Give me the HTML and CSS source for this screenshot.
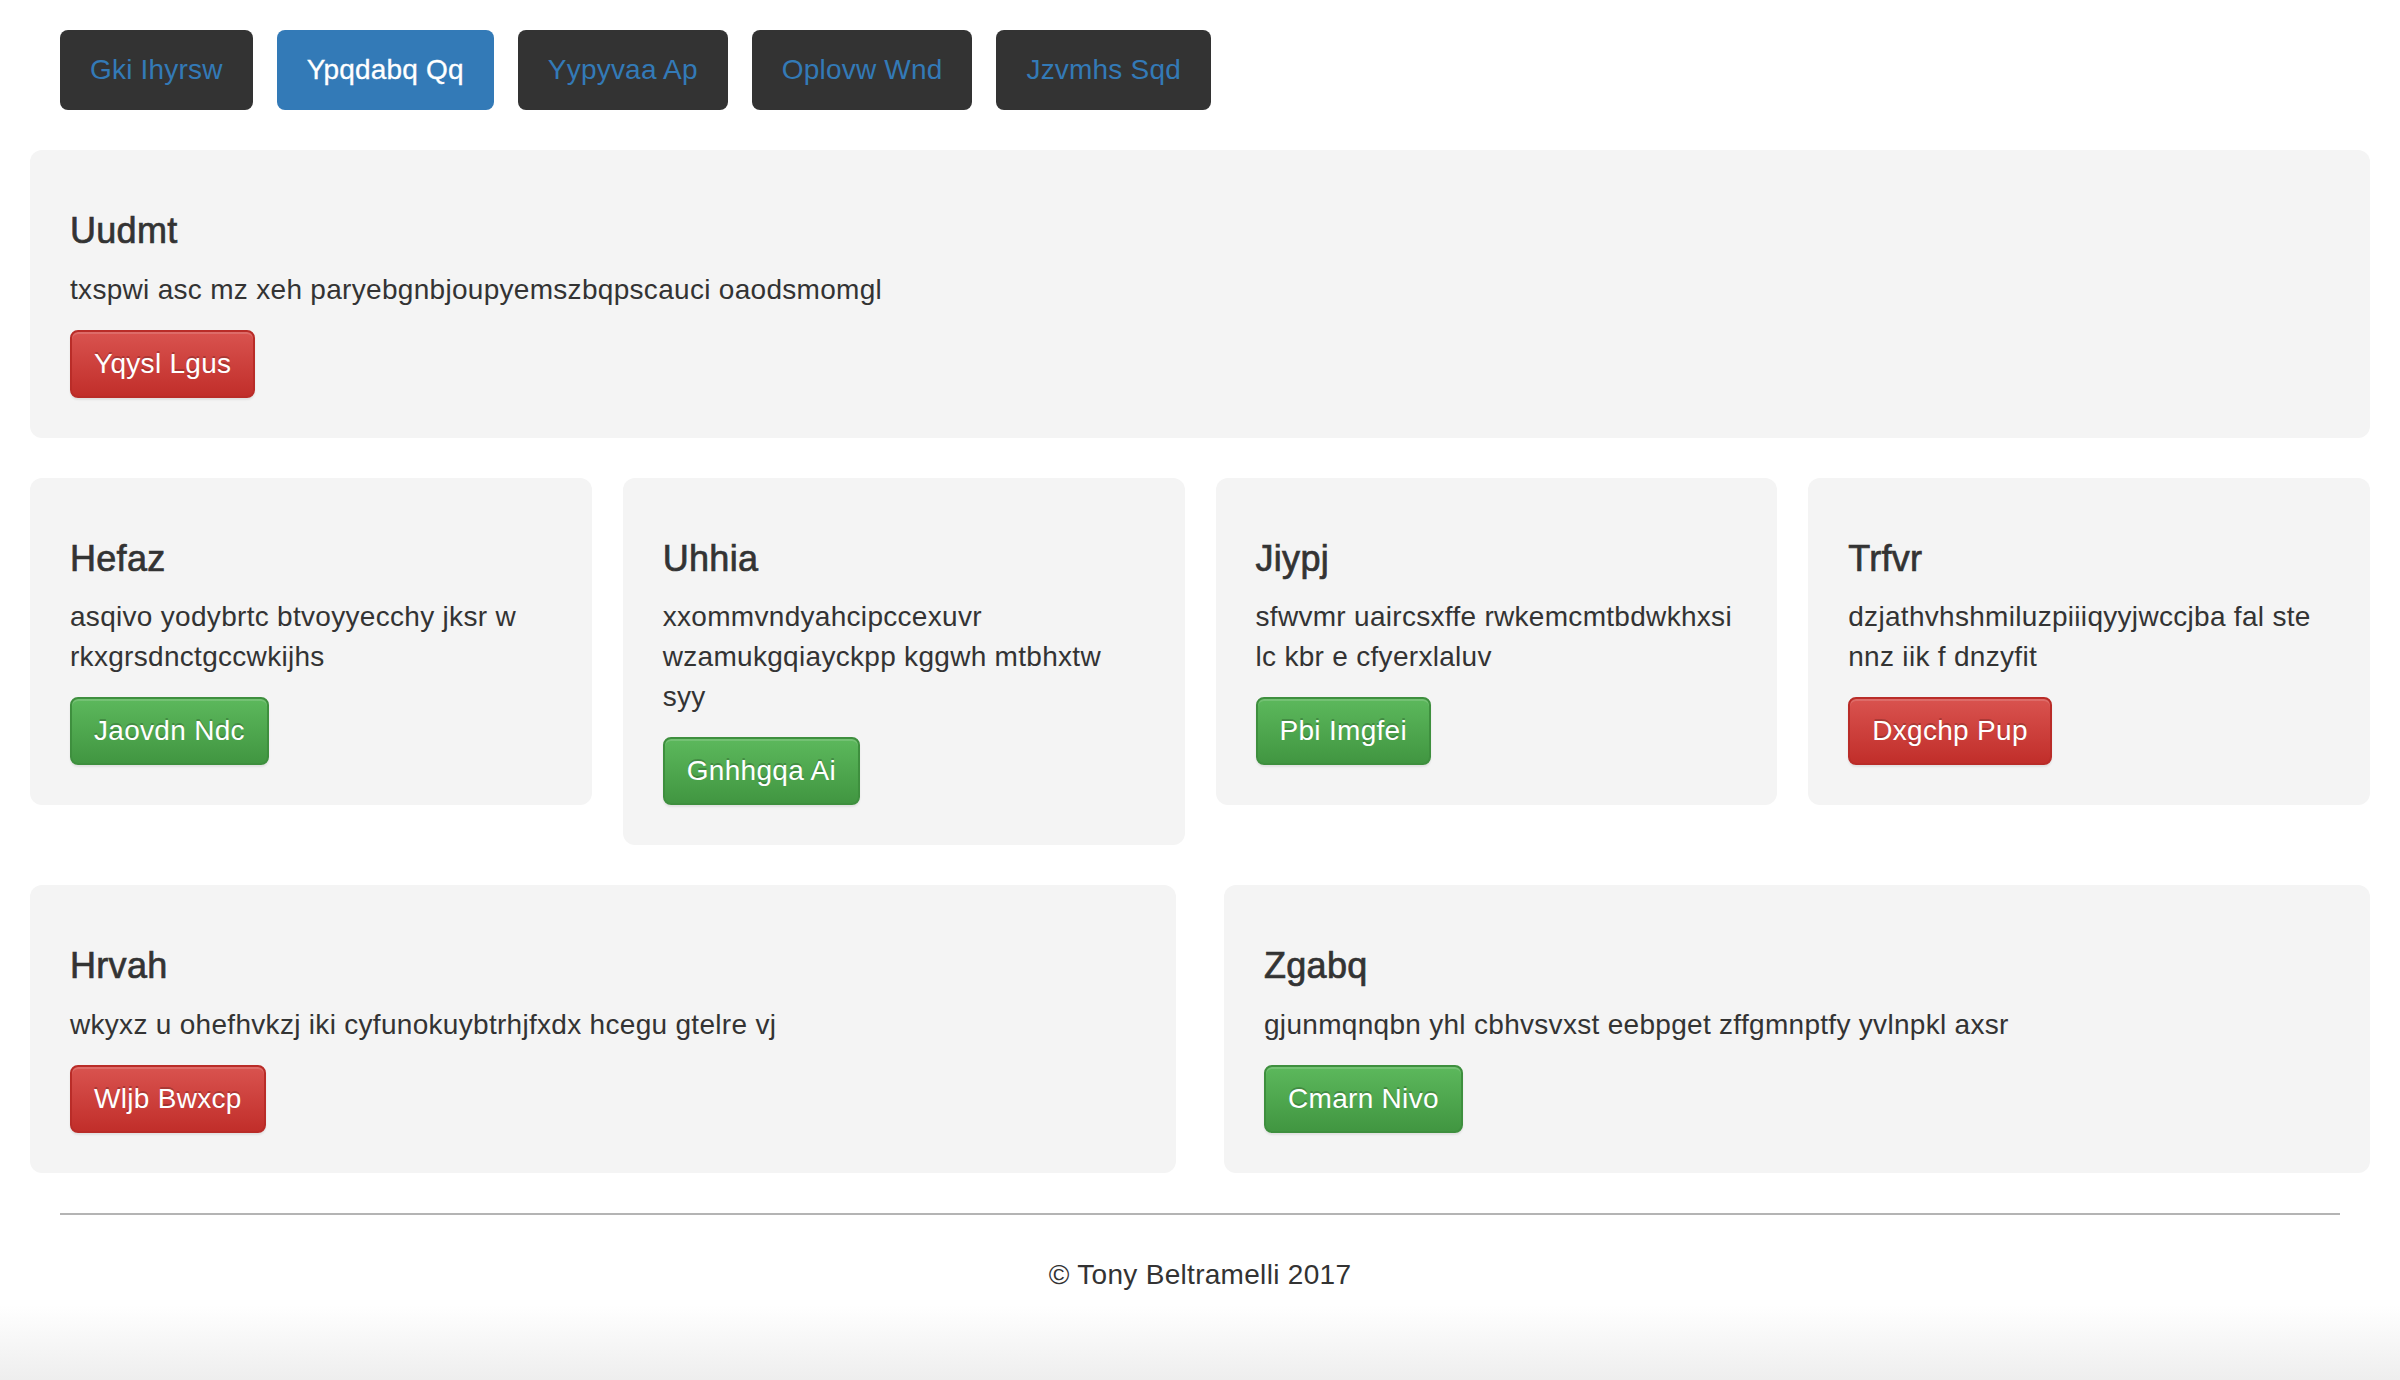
FILE: index.html
```html
<!DOCTYPE html>
<html>
<head>
<meta charset="utf-8">
<title>Page</title>
<link rel="stylesheet" href="styles.css">
</head>
<body>
<div class="container">
  <ul class="nav">
    <li><a class="pill" href="#">Gki Ihyrsw</a></li>
    <li><a class="pill active" href="#">Ypqdabq Qq</a></li>
    <li><a class="pill" href="#">Yypyvaa Ap</a></li>
    <li><a class="pill" href="#">Oplovw Wnd</a></li>
    <li><a class="pill" href="#">Jzvmhs Sqd</a></li>
  </ul>

  <div class="row row-1">
    <div class="well">
      <h4>Uudmt</h4>
      <p>txspwi asc mz xeh paryebgnbjoupyemszbqpscauci oaodsmomgl</p>
      <a class="btn btn-danger" href="#">Yqysl Lgus</a>
    </div>
  </div>

  <div class="row row-4">
    <div class="well">
      <h4>Hefaz</h4>
      <p>asqivo yodybrtc btvoyyecchy jksr w rkxgrsdnctgccwkijhs</p>
      <a class="btn btn-success" href="#">Jaovdn Ndc</a>
    </div>
    <div class="well">
      <h4>Uhhia</h4>
      <p>xxommvndyahcipccexuvr wzamukgqiayckpp kggwh mtbhxtw syy</p>
      <a class="btn btn-success" href="#">Gnhhgqa Ai</a>
    </div>
    <div class="well">
      <h4>Jiypj</h4>
      <p>sfwvmr uaircsxffe rwkemcmtbdwkhxsi lc kbr e cfyerxlaluv</p>
      <a class="btn btn-success" href="#">Pbi Imgfei</a>
    </div>
    <div class="well">
      <h4>Trfvr</h4>
      <p>dzjathvhshmiluzpiiiqyyjwccjba fal ste nnz iik f dnzyfit</p>
      <a class="btn btn-danger" href="#">Dxgchp Pup</a>
    </div>
  </div>

  <div class="row row-2">
    <div class="well">
      <h4>Hrvah</h4>
      <p>wkyxz u ohefhvkzj iki cyfunokuybtrhjfxdx hcegu gtelre vj</p>
      <a class="btn btn-danger" href="#">Wljb Bwxcp</a>
    </div>
    <div class="well">
      <h4>Zgabq</h4>
      <p>gjunmqnqbn yhl cbhvsvxst eebpget zffgmnptfy yvlnpkl axsr</p>
      <a class="btn btn-success" href="#">Cmarn Nivo</a>
    </div>
  </div>

  <hr class="rule">
  <footer class="footer">
    <p>&copy; Tony Beltramelli 2017</p>
  </footer>
</div>
</body>
</html>
```

FILE: styles.css
```css
* {
  box-sizing: border-box;
}

html {
  background: #fff;
}

body {
  margin: 0;
  min-height: 1380px;
  font-family: "Helvetica Neue", Helvetica, "Liberation Sans", Arial, sans-serif;
  font-size: 28px;
  line-height: 40px;
  letter-spacing: 0.3px;
  color: #333;
  background: linear-gradient(to bottom, #fff 0, #fff 1305px, #eeeeee 1380px);
}

.container {
  padding: 0 30px;
}

.nav {
  list-style: none;
  margin: 0 0 40px;
  padding: 30px 30px 0;
  display: flex;
  gap: 24px;
}

.pill {
  display: block;
  padding: 20px 30px;
  background: #333;
  color: #337ab7;
  text-decoration: none;
  border-radius: 8px;
  letter-spacing: 0.2px;
}

.pill.active {
  background: #337ab7;
  color: #fff;
  -webkit-text-stroke: 0.3px #fff;
}

.row {
  display: grid;
  align-items: start;
}

.row-1 {
  grid-template-columns: 1fr;
}

.row-4 {
  grid-template-columns: repeat(4, 1fr);
  column-gap: 31px;
}

.row-2 {
  grid-template-columns: repeat(2, 1fr);
  column-gap: 48px;
}

.well {
  background: #f4f4f4;
  border-radius: 12px;
  padding: 40px;
  margin-bottom: 40px;
}

.well h4 {
  margin: 21px 0 19px;
  font-size: 36px;
  line-height: 39.6px;
  font-weight: 500;
  color: #333;
  -webkit-text-stroke: 0.7px #333;
}

.well p {
  margin: 0 0 20px;
}

.btn {
  display: inline-block;
  padding: 12px 22px;
  font-size: 28px;
  line-height: 40px;
  color: #fff;
  text-decoration: none;
  border: 2px solid transparent;
  border-radius: 8px;
  text-shadow: 0 -2px 0 rgba(0, 0, 0, 0.2);
  box-shadow: inset 0 2px 0 rgba(255, 255, 255, 0.15), 0 2px 2px rgba(0, 0, 0, 0.075);
}

.btn-danger {
  background: linear-gradient(to bottom, #d9534f 0, #c12e2a 100%);
  border-color: #b92c28;
}

.btn-success {
  background: linear-gradient(to bottom, #5cb85c 0, #419641 100%);
  border-color: #3e8f3e;
}

.rule {
  margin: 0 30px;
  border: 0;
  border-top: 2px solid #b4b4b4;
  height: 0;
}

.footer p {
  margin: 40px 0 0;
  text-align: center;
}
```
